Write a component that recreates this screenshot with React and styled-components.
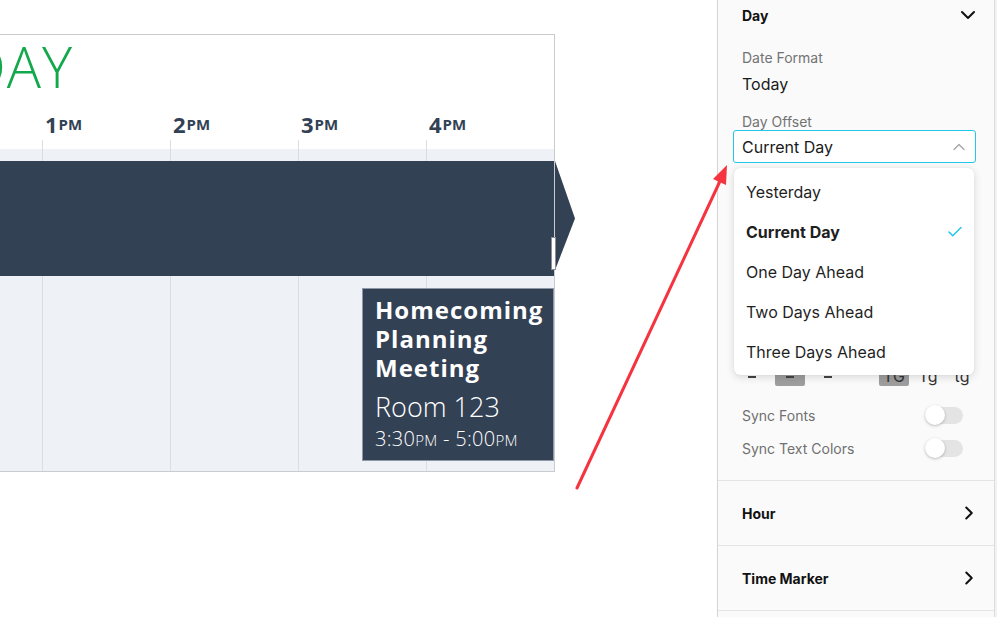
import styled, { createGlobalStyle } from "styled-components";
import { ChevronDown, ChevronRight, ChevronUp, Check } from "lucide-react";

const HOUR_W = 128;
const START_HOUR = 11;

const hours = [
  { n: "11", s: "AM" },
  { n: "12", s: "PM" },
  { n: "1", s: "PM" },
  { n: "2", s: "PM" },
  { n: "3", s: "PM" },
  { n: "4", s: "PM" },
];

const options = ["Yesterday", "Current Day", "One Day Ahead", "Two Days Ahead", "Three Days Ahead"];

export default function App() {
  const cardLeft = (15.5 - START_HOUR) * HOUR_W;
  return (
    <>
      <GlobalStyle />
      <Page>
        <Canvas>
          <Widget>
            <Title>TODAY</Title>
            <HourRow>
              {hours.map((h) => (
                <HourCell key={h.n}>
                  <HourLabel>
                    {h.n}
                    <small>{h.s}</small>
                  </HourLabel>
                  <Tick />
                </HourCell>
              ))}
            </HourRow>
            <Body>
              {hours.map((h) => (
                <Column key={h.n} />
              ))}
              <AllDayBar>
                <Handle />
              </AllDayBar>
              <EventCard style={{ left: cardLeft }}>
                <EventTitle>Homecoming Planning Meeting</EventTitle>
                <EventRoom>Room 123</EventRoom>
                <EventTime>
                  3:30<small>PM</small> - 5:00<small>PM</small>
                </EventTime>
              </EventCard>
            </Body>
          </Widget>
        </Canvas>

        <Panel>
          <PanelScroll>
            <SectionHeader $first>
              Day
              <ChevronDown size={24} strokeWidth={2} />
            </SectionHeader>
            <SectionBody>
              <FieldLabel>Date Format</FieldLabel>
              <FieldValue>Today</FieldValue>
              <FieldLabel $gap>Day Offset</FieldLabel>
              <Select>
                Current Day
                <ChevronUp size={20} strokeWidth={1.5} />
              </Select>
              <AlignRow>
                <BtnGroup>
                  <AlignBtn><Dash /></AlignBtn>
                  <AlignBtn $active><Dash /></AlignBtn>
                  <AlignBtn><Dash /></AlignBtn>
                </BtnGroup>
                <BtnGroup $tight>
                  <AlignBtn $active>TG</AlignBtn>
                  <AlignBtn>Tg</AlignBtn>
                  <AlignBtn>tg</AlignBtn>
                </BtnGroup>
              </AlignRow>
              <ToggleRow $first>
                Sync Fonts
                <Switch />
              </ToggleRow>
              <ToggleRow>
                Sync Text Colors
                <Switch />
              </ToggleRow>
            </SectionBody>
            <SectionHeader>
              Hour
              <ChevronRight size={22} strokeWidth={2.2} />
            </SectionHeader>
            <SectionHeader>
              Time Marker
              <ChevronRight size={22} strokeWidth={2.2} />
            </SectionHeader>
            <SectionHeader />
          </PanelScroll>

          <Menu>
            {options.map((o) => (
              <MenuItem key={o} $selected={o === "Current Day"}>
                {o}
                {o === "Current Day" && <Check size={18} strokeWidth={2} />}
              </MenuItem>
            ))}
          </Menu>
        </Panel>
        <ScrollTrack />

        <Pointer viewBox="0 0 997 617" width="997" height="617">
          <line x1="577" y1="488" x2="721" y2="179" stroke="#f5343f" strokeWidth="3" strokeLinecap="round" />
          <polygon points="727,165 713,179 726,185" fill="#f5343f" />
        </Pointer>
      </Page>
    </>
  );
}

//style
const GlobalStyle = createGlobalStyle`
  body {
    margin: 0;
    overflow: hidden;
    background: #fff;
  }
`;

const Page = styled.div`
  position: relative;
  display: flex;
  width: 997px;
  height: 617px;
  overflow: hidden;
`;

const Canvas = styled.div`
  width: 717px;
  flex-shrink: 0;
  background: #fff;
  overflow: hidden;
  padding-top: 34px;
  box-sizing: border-box;
`;

const Widget = styled.div`
  width: 770px;
  box-sizing: border-box;
  margin-left: -215px;
  border: 1px solid #c9cbcf;
  background: #fff;
  font-family: "Open Sans", "Liberation Sans", sans-serif;
  color: #334155;
`;

const Title = styled.div`
  height: 62px;
  line-height: 62px;
  padding-left: 104px;
  font-size: 57px;
  font-weight: 300;
  color: #12a84b;
  letter-spacing: 1px;
`;

const HourRow = styled.div`
  display: flex;
  height: 52px;
`;

const HourCell = styled.div`
  width: ${HOUR_W}px;
  display: flex;
  flex-direction: column;
`;

const HourLabel = styled.div`
  flex: 1;
  display: flex;
  align-items: flex-end;
  padding: 0 0 4px 3px;
  font-size: 22px;
  font-weight: 700;
  line-height: 24px;
  small {
    font-size: 15px;
    margin-left: 1px;
  }
`;

const Tick = styled.div`
  height: 9px;
  border-left: 1px solid #d9dee6;
`;

const Body = styled.div`
  position: relative;
  display: flex;
  height: 322px;
  background: #eef2f7;
`;

const Column = styled.div`
  width: ${HOUR_W}px;
  border-left: 1px solid #d9dee6;
  box-sizing: border-box;
`;

const AllDayBar = styled.div`
  position: absolute;
  left: 0;
  right: 0;
  top: 12px;
  height: 115px;
  background: #334155;
  &::after {
    content: "";
    position: absolute;
    left: calc(100% + 1px);
    top: 0;
    width: 20px;
    height: 100%;
    background: #334155;
    clip-path: polygon(0 0, 100% 50%, 0 95%);
  }
`;

const Handle = styled.div`
  position: absolute;
  right: -2px;
  top: 76px;
  width: 3px;
  height: 31px;
  background: #fff;
  border: 1px solid #8a8f98;
  z-index: 2;
`;

const EventCard = styled.div`
  position: absolute;
  right: 0;
  top: 139px;
  height: 173px;
  box-sizing: border-box;
  padding: 6px 0 0 12px;
  background: #334155;
  border: 1px solid #8d97a6;
  color: #fff;
  overflow: hidden;
`;

const EventTitle = styled.div`
  font-size: 24px;
  font-weight: 700;
  line-height: 29px;
  letter-spacing: 1px;
`;

const EventRoom = styled.div`
  margin-top: 9px;
  font-size: 27px;
  font-weight: 300;
  line-height: 32px;
`;

const EventTime = styled.div`
  margin-top: 4px;
  font-size: 20px;
  font-weight: 300;
  line-height: 24px;
  letter-spacing: 0.3px;
  small {
    font-size: 15px;
  }
`;

const Panel = styled.div`
  position: relative;
  width: 276px;
  flex-shrink: 0;
  background: #fafafa;
  border-left: 1px solid #d4d4d4;
  border-right: 1px solid #dcdcdc;
  font-family: Inter, "Liberation Sans", sans-serif;
  color: #1f1f1f;
`;

const ScrollTrack = styled.div`
  width: 3px;
  background: #f2f2f2;
`;

const PanelScroll = styled.div`
  margin-top: -17px;
`;

const SectionHeader = styled.div`
  display: flex;
  align-items: center;
  justify-content: space-between;
  height: 64px;
  padding: 0 14px 0 24px;
  border-top: ${(p) => (p.$first ? "none" : "1px solid #e4e4e4")};
  font-size: 14px;
  font-weight: 700;
  color: #111;
  svg {
    color: #111;
  }
`;

const SectionBody = styled.div`
  padding: 3px 18px 15px 15px;
`;

const FieldLabel = styled.div`
  padding-left: 9px;
  margin-top: ${(p) => (p.$gap ? "20px" : "0")};
  font-size: 14px;
  line-height: 16px;
  color: #737373;
`;

const FieldValue = styled.div`
  padding-left: 9px;
  margin-top: 8px;
  font-size: 16px;
  line-height: 20px;
  color: #1a1a1a;
`;

const Select = styled.div`
  display: flex;
  align-items: center;
  justify-content: space-between;
  height: 33px;
  box-sizing: border-box;
  padding: 0 6px 0 8px;
  background: #fff;
  border: 1px solid #22c6e8;
  border-radius: 3px;
  font-size: 16px;
  color: #1a1a1a;
  svg {
    color: #a3a3a3;
  }
`;

const AlignRow = styled.div`
  display: flex;
  justify-content: space-between;
  margin-top: 203px;
  padding-left: 4px;
  margin-right: -1px;
`;

const BtnGroup = styled.div`
  display: flex;
  gap: ${(p) => (p.$tight ? "4px" : "8px")};
`;

const AlignBtn = styled.div`
  display: flex;
  align-items: center;
  justify-content: center;
  width: 30px;
  height: 20px;
  background: ${(p) => (p.$active ? "#9e9e9e" : "transparent")};
  border-radius: 2px;
  font-size: 16px;
  color: #333;
`;

const Dash = styled.span`
  width: 8px;
  height: 2px;
  margin-top: 2px;
  background: #444;
`;

const ToggleRow = styled.div`
  display: flex;
  align-items: center;
  justify-content: space-between;
  height: 33px;
  margin-top: ${(p) => (p.$first ? "13px" : "0")};
  padding-left: 9px;
  margin-right: 13px;
  font-size: 14px;
  color: #707070;
`;

const Switch = styled.span`
  position: relative;
  width: 38px;
  height: 17px;
  border-radius: 9px;
  background: #e4e4e4;
  &::before {
    content: "";
    position: absolute;
    left: 0;
    top: -2px;
    width: 20px;
    height: 20px;
    border-radius: 50%;
    background: #fff;
    box-shadow: 0 1px 3px rgba(0, 0, 0, 0.25);
  }
`;

const Menu = styled.div`
  position: absolute;
  left: 16px;
  top: 168px;
  width: 240px;
  height: 207px;
  box-sizing: border-box;
  padding-top: 4px;
  background: #fff;
  border-radius: 6px;
  box-shadow: 0 2px 8px rgba(0, 0, 0, 0.14), 0 0 1px rgba(0, 0, 0, 0.15);
  z-index: 5;
`;

const MenuItem = styled.div`
  display: flex;
  align-items: center;
  justify-content: space-between;
  height: 40px;
  padding: 0 10px 0 12px;
  font-size: 16px;
  font-weight: ${(p) => (p.$selected ? 700 : 400)};
  color: #1f1f1f;
  svg {
    color: #22c5e8;
  }
`;

const Pointer = styled.svg`
  position: absolute;
  left: 0;
  top: 0;
  pointer-events: none;
  z-index: 10;
`;
